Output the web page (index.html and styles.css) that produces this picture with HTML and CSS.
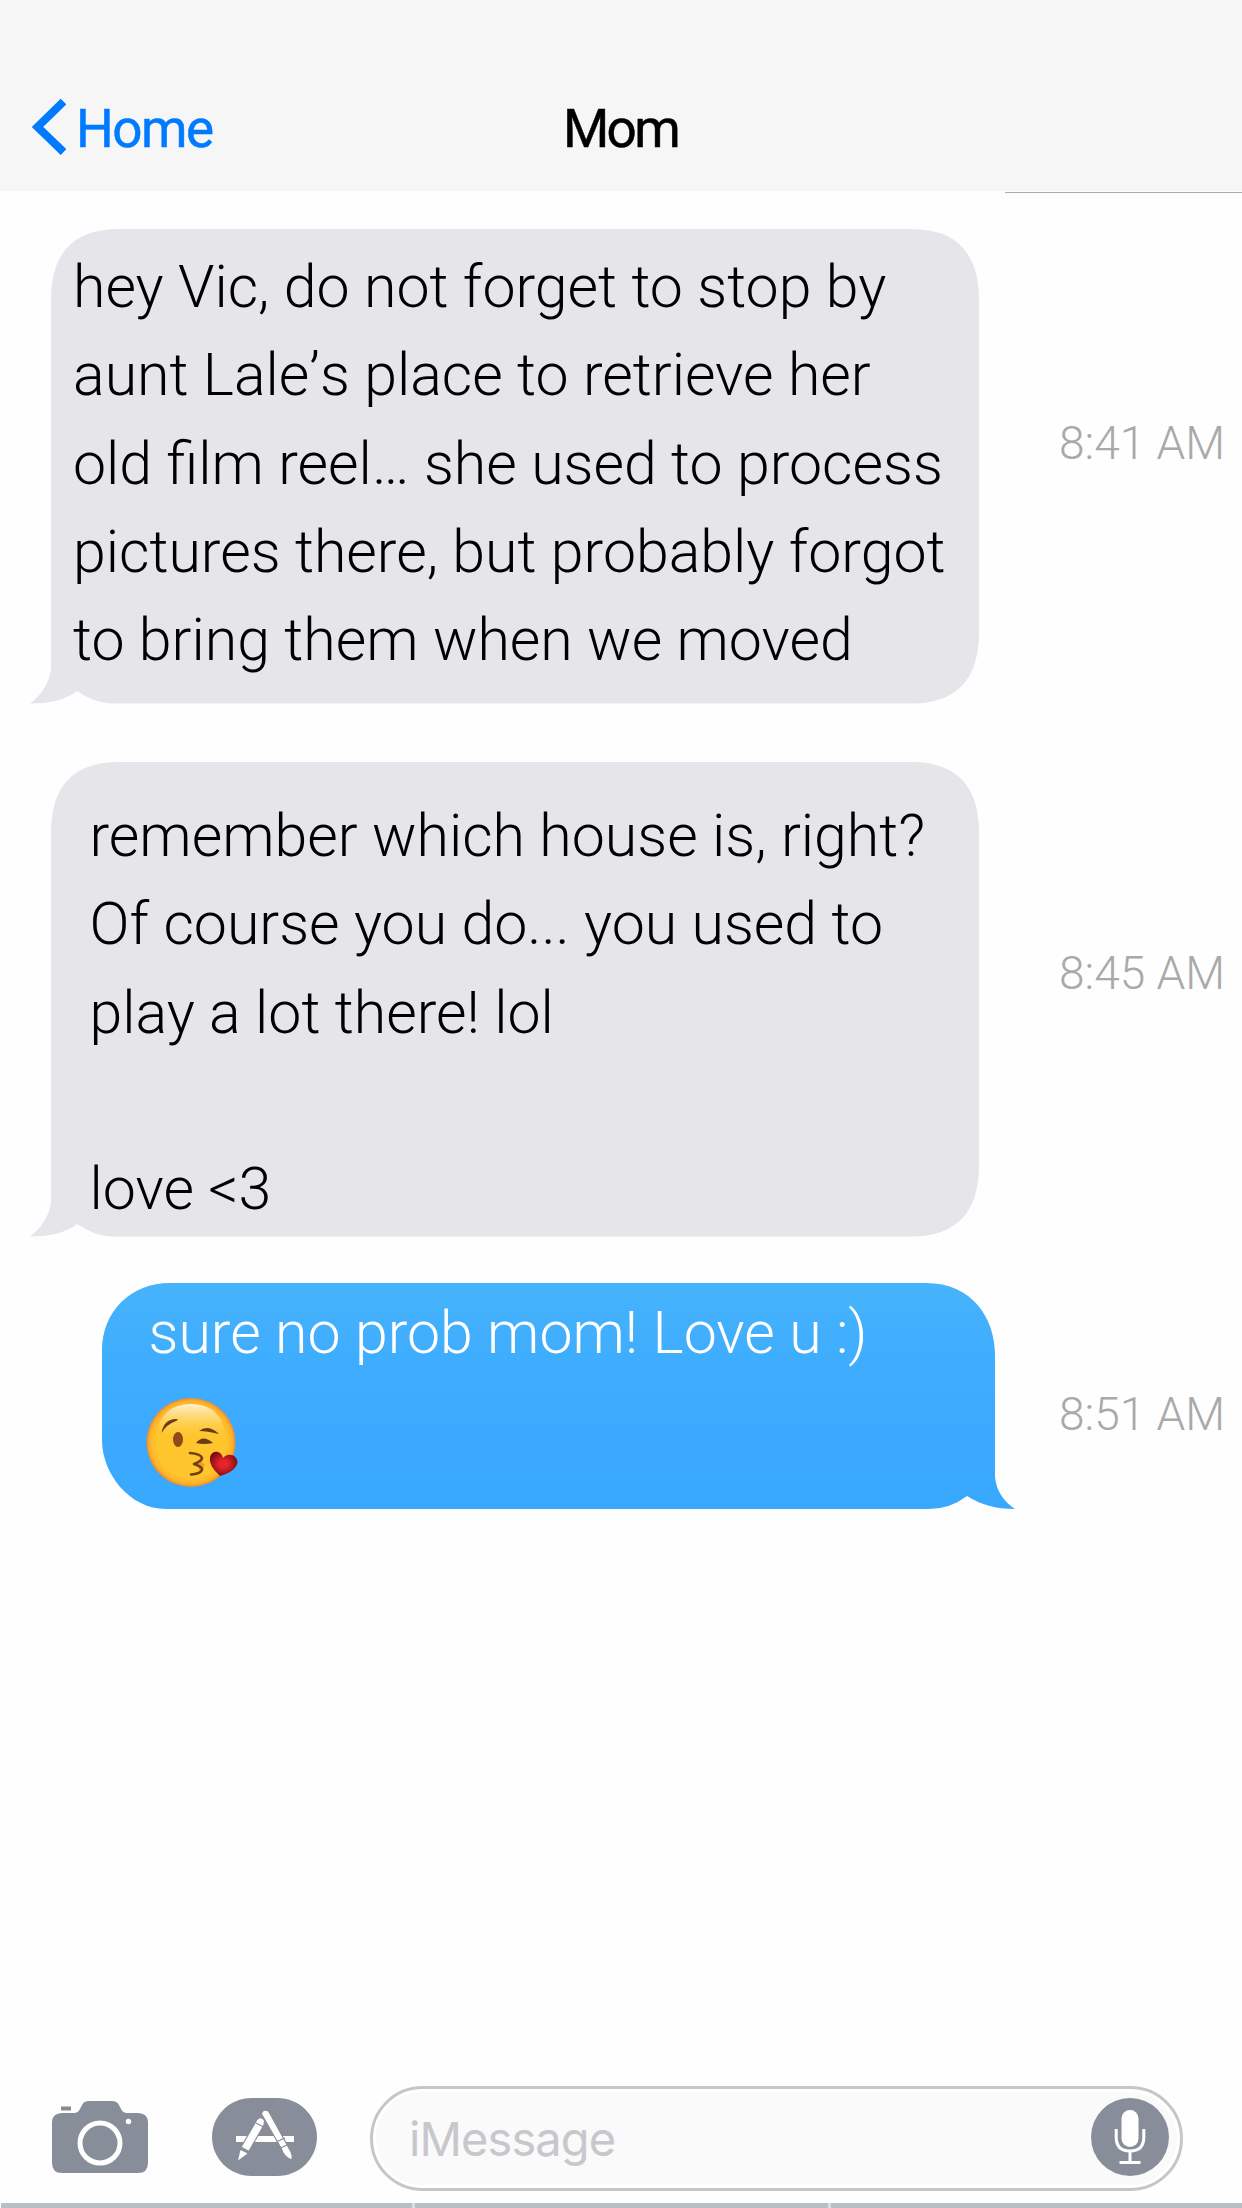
FILE: index.html
```html
<!DOCTYPE html>
<html lang="en">
<head>
<meta charset="utf-8">
<title>Mom</title>
<link rel="stylesheet" href="styles.css">
</head>
<body>
<div class="screen">
  <header class="nav">
    <a class="back"><svg class="chevron" width="34" height="58" viewBox="0 0 34 58"><path d="M31.500 3.500L5.500 29L31.500 54" fill="none" stroke="#007aff" stroke-width="8"/></svg><span class="home">Home</span></a>
    <h1 class="title">Mom</h1>
  </header>
  <div class="rule"></div>
  <main class="thread">
    <section class="row">
      <div class="bubble received first">
        <svg class="shape" width="952" height="478" viewBox="0 0 952 478"><path d="M90 0H882Q950 0 950 71V403Q950 474.500 882 474.500H84Q66 474.500 48 462Q32 474.500 1 474.500Q20 460 22 439V71Q22 0 90 0Z" fill="#e5e5ea"/></svg>
        <p class="line">hey Vic, do not forget to stop by</p>
        <p class="line">aunt Lale<span class="apostrophe">’</span>s place to retrieve her</p>
        <p class="line">old film reel… she used to process</p>
        <p class="line">pictures there, but probably forgot</p>
        <p class="line">to bring them when we moved</p>
      </div>
      <time class="time">8:41 AM</time>
    </section>
    <section class="row second-row">
      <div class="bubble received second">
        <svg class="shape" width="952" height="478" viewBox="0 0 952 478"><path d="M90 0H882Q950 0 950 71V403Q950 474.500 882 474.500H84Q66 474.500 48 462Q32 474.500 1 474.500Q20 460 22 439V71Q22 0 90 0Z" fill="#e5e5ea"/></svg>
        <p class="line">remember which house is, right?</p>
        <p class="line">Of course you do... you used to</p>
        <p class="line">play a lot there! lol</p>
        <p class="line">&nbsp;</p>
        <p class="line">love &lt;3</p>
      </div>
      <time class="time">8:45 AM</time>
    </section>
    <section class="row third-row">
      <div class="bubble sent">
        <svg class="shape" width="914" height="227" viewBox="0 0 914 227"><defs><linearGradient id="blue" x1="0" y1="0" x2="0" y2="1"><stop offset="0" stop-color="#46b3fb"/><stop offset=".4" stop-color="#3eacff"/><stop offset="1" stop-color="#38a8fd"/></linearGradient></defs><path d="M69 0H825C872 0 894 36 894 72V194Q896 214 914 226Q886 226 866 213Q849 226 828 226H65C28 226 1 190 1 157V68C1 28 30 0 69 0Z" fill="url(#blue)"/></svg>
        <p class="line">sure no prob mom! Love u :)</p>
        <svg class="emoji" width="94" height="92" viewBox="0 0 94 92">
          <defs>
            <radialGradient id="face" cx=".5" cy=".5" r=".5"><stop offset=".8" stop-color="#ffc52c"/><stop offset=".93" stop-color="#fdb22b"/><stop offset="1" stop-color="#f28a25"/></radialGradient>
            <linearGradient id="gloss" x1="0" y1="0" x2="0" y2="1"><stop offset="0" stop-color="#fff1d0"/><stop offset="1" stop-color="#ffc52c" stop-opacity=".3"/></linearGradient>
            <radialGradient id="heart" cx=".5" cy=".5" r=".6"><stop offset=".25" stop-color="#e5232b"/><stop offset="1" stop-color="#6c080d"/></radialGradient>
          </defs>
          <circle cx="45" cy="45.500" r="44.500" fill="url(#face)"/>
          <path d="M12 37C12 18 26 7 45 7S78 18 78 37Q45 42 12 37Z" fill="url(#gloss)"/>
          <path d="M15.500 36Q18 22 30 22Q34 22 29 24.500Q21 27 15.500 36ZM53 34Q62 27 73 37Q61 34 53 34Z" fill="#6a3b15"/>
          <ellipse cx="32" cy="42.500" rx="5" ry="7.500" fill="#8d4a1a"/>
          <path d="M50 46Q57 37 67 46Q58 48 50 46Z" fill="#6a3b15"/>
          <path d="M52 62L59 68L53 76Z" fill="#f79633"/>
          <path d="M44 56Q55 57 56 61Q56 64 48 67Q57 70 56 73Q54 77 45 77.500" fill="none" stroke="#71400f" stroke-width="2.600" stroke-linecap="round" stroke-linejoin="round"/>
          <path d="M74 79Q62 68 64 60C66 53 75 53 77 61C82 55 91 58 91.500 65C91 72 82 77 74 79Z" fill="url(#heart)"/>
        </svg>
      </div>
      <time class="time">8:51 AM</time>
    </section>
  </main>
  <footer class="composer">
    <svg class="camera" width="97" height="73" viewBox="0 0 97 73"><path d="M9 5.500h10v4H9z" fill="#8a8a8c"/><path d="M10 12H22Q26 12 28 8L30 4Q32 0 37 0H60Q65 0 67 4L69 8Q71 12 75 12H86Q96 12 96 22V62Q96 72 86 72H10Q0 72 0 62V22Q0 12 10 12Z" fill="#888e99"/><circle cx="48" cy="42" r="20" fill="none" stroke="#fff" stroke-width="5"/><circle cx="76.500" cy="20.500" r="2.700" fill="#fff"/></svg>
    <svg class="apps" width="106" height="78" viewBox="0 0 106 78"><path d="M40 0H65C88 0 105 18 105 39S88 78 65 78H40C17 78 0 60 0 39S17 0 40 0Z" fill="#888e99"/><path d="M24 38h58v6H24z" fill="#fff"/><g stroke="#888e99"><path d="M45 21.500Q49 17.500 52.500 22.500L52 27L36.500 54L28.500 50Z" fill="#fff" stroke-width="1.200"/><path d="M44 25L51.500 29M29 49L37 53.500" stroke-width="1.200"/><path d="M49.500 16Q50.500 10.500 56.500 13L79 54Q81 58 80 62Q71.500 59.500 69.500 51Z" fill="#fff" stroke-width="1.200"/><path d="M65 43.500L73 40M68.500 50L77 46" stroke-width="1.200"/></g><path d="M28.500 52L35.500 55.500L26 62.500Z" fill="#fff"/></svg>
    <div class="field"><span class="placeholder">iMessage</span>
      <svg class="mic" width="78" height="78" viewBox="0 0 78 78"><circle cx="39" cy="39" r="39" fill="#888e99"/><rect x="30.500" y="12" width="17" height="37" rx="8.500" fill="#fff"/><path d="M25.200 31V39Q25.200 53 39 53T52.800 39V31M39 53V65M28.500 64.500H49.500" fill="none" stroke="#fff" stroke-width="3"/></svg>
    </div>
  </footer>
  <div class="keyboard-edge"><i></i><i></i><i></i></div>
</div>
</body>
</html>
```
FILE: styles.css
```css
* { box-sizing: border-box; }
body { margin: 0; background: #fff; font-family: Roboto, "Liberation Sans", sans-serif; }
.screen { width: 1242px; height: 2208px; display: flex; flex-direction: column; overflow: hidden; background: #fefefe; }
.nav { height: 191px; flex: none; background: #f6f6f6; display: grid; grid-template-columns: 1fr auto 1fr; padding: 98px 33px 0 32px; align-items: start; }
.back { display: flex; gap: 10px; color: #007aff; }
.chevron { display: block; }
.home, .title { font-size: 53px; line-height: 63px; letter-spacing: -2.6px; -webkit-text-stroke: .5px currentColor; }
.home { letter-spacing: -1.5px; }
.title { margin: 0; font-weight: 400; color: #000; }
.rule { flex: none; width: 237px; height: 2px; margin-left: auto; margin-bottom: 36px; border-top: 1px solid #fff; border-bottom: 1px solid #aaa; }
.thread { flex: 1; display: flex; flex-direction: column; }
.row { display: flex; justify-content: space-between; padding: 0 17px 0 29px; }
.second-row { margin-top: 55px; }
.third-row { margin-top: 43px; padding-left: 101px; }
.bubble { position: relative; width: 951px; height: 478px; color: #000; }
.shape { position: absolute; left: 0; top: 0; }
.line { position: relative; margin: 0; font-weight: 300; font-size: 59px; line-height: 88.250px; white-space: nowrap; }
.apostrophe { display: inline-block; }
.first { padding: 14px 0 0 44px; }
.second { padding: 30px 0 0 60.500px; }
.sent { width: 914px; height: 227px; padding: 6px 0 0 47.500px; color: #fff; }
.emoji { position: relative; display: block; margin: 20px 0 0 -3px; }
.time { margin-top: 187px; font-size: 46px; line-height: 54px; font-weight: 300; color: #a9a9a9; }
.second-row .time { margin-top: 184px; }
.third-row .time { margin-top: 104px; }
.composer { flex: none; display: flex; align-items: flex-start; height: 117px; padding-left: 52px; }
.camera { margin-top: 15px; }
.apps { margin: 12px 0 0 63px; }
.field { width: 813px; height: 105px; margin-left: 52px; padding: 0 11px 4px 36px; display: flex; align-items: center; justify-content: space-between; border: 3px solid #c6c6c8; border-radius: 53px; background: #fafafa; box-shadow: inset 0 0 0 3px #fff; }
.placeholder { padding-top: 4px; font-family: Inter, sans-serif; font-size: 47px; letter-spacing: -.9px; color: #c7c7cc; }
.keyboard-edge { flex: none; height: 5px; display: grid; grid-template-columns: 414px 416px 1fr; background: #babfc7; margin-left: 1px; }
.keyboard-edge i { border-right: 3px solid #dddfe3; }
.keyboard-edge i:last-child { border-right: 0; }
```
